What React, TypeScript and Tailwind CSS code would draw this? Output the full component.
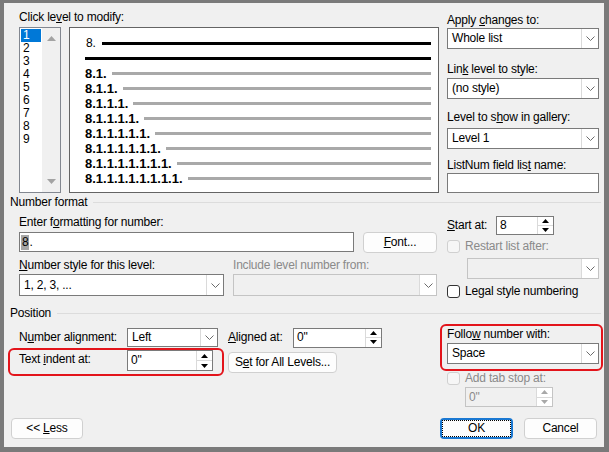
import React from 'react';

// Word "Define new Multilevel list" dialog, expanded view

const levels = ['1', '2', '3', '4', '5', '6', '7', '8', '9'];
const previewRows = [
  '8.1.',
  '8.1.1.',
  '8.1.1.1.',
  '8.1.1.1.1.',
  '8.1.1.1.1.1.',
  '8.1.1.1.1.1.1.',
  '8.1.1.1.1.1.1.1.',
  '8.1.1.1.1.1.1.1.1.',
];

function Chevron() {
  return (
    <svg width="9" height="5" viewBox="0 0 9 5" className="block">
      <path d="M0.5 0.5L4.5 4.5L8.5 0.5" fill="none" stroke="#6b6b6b" strokeWidth="1" />
    </svg>
  );
}

function Tri({ up, color }: { up?: boolean; color: string }) {
  return (
    <svg width="7" height="4" viewBox="0 0 7 4" className="block">
      <path d={up ? 'M0 4L3.5 0L7 4Z' : 'M0 0L3.5 4L7 0Z'} fill={color} />
    </svg>
  );
}

function Select({
  value,
  className,
  disabled,
}: {
  value?: string;
  className: string;
  disabled?: boolean;
}) {
  return (
    <div
      className={`flex border ${
        disabled ? 'border-[#c4c4c4] bg-[#f0f0f0]' : 'border-[#7a7a7a] bg-white'
      } ${className}`}
    >
      <div className="flex-1 flex items-center pl-[4px] text-black">{value}</div>
      <div className="w-[17px] border-l border-[#dadada] bg-white flex items-center justify-center">
        <Chevron />
      </div>
    </div>
  );
}

function Spin({
  value,
  className,
  disabled,
}: {
  value: string;
  className: string;
  disabled?: boolean;
}) {
  const c = disabled ? '#a8a8a8' : '#000000';
  return (
    <div
      className={`flex border ${
        disabled ? 'border-[#c4c4c4] bg-[#f0f0f0] text-[#8a8a8a]' : 'border-[#7a7a7a] bg-white text-black'
      } ${className}`}
    >
      <div className="flex-1 flex items-center pl-[3px]">{value}</div>
      <div className="w-[16px] flex flex-col border-l border-[#dadada] bg-white">
        <div className="flex-1 flex items-center justify-center border-b border-[#dadada]">
          <Tri up color={c} />
        </div>
        <div className="flex-1 flex items-center justify-center">
          <Tri color={c} />
        </div>
      </div>
    </div>
  );
}

function Check({ disabled }: { disabled?: boolean }) {
  return (
    <div
      className={`w-[13px] h-[13px] rounded-[3px] border ${
        disabled ? 'border-[#d0d0d0] bg-[#f6f6f6]' : 'border-[#333333] bg-white'
      }`}
    />
  );
}

function Btn({ children, className }: { children: React.ReactNode; className: string }) {
  return (
    <div
      className={`h-[21px] rounded-[4px] border border-[#d0d0d0] bg-[#fdfdfd] flex items-center justify-center ${className}`}
    >
      {children}
    </div>
  );
}

function Section({ title }: { title: string }) {
  return (
    <div className="flex items-center h-[15px] pl-[6px] pr-[3px]">
      <span>{title}</span>
      <div className="flex-1 h-px bg-[#dcdcdc] ml-[6px]" />
    </div>
  );
}

export default function App() {
  return (
    <div className="w-[609px] h-[452px] bg-[#7a7a7a] pt-[3px] pl-[4px] font-['Liberation_Sans',Arial,sans-serif] text-[12px] leading-[15px] tracking-[-0.2px] text-black">
      <div className="relative w-[600px] h-[444px] bg-[#f0f0f0]">
        {/* Top: levels, preview, list options */}
        <div className="flex items-start pl-[15px] pt-[7px]">
          <div className="w-[420px]">
            <div className="h-[15px]">
              Click le<u>v</u>el to modify:
            </div>
            <div className="mt-[2px] flex gap-[8px]">
              <div className="w-[42px] h-[166px] border border-[#828790] bg-white flex">
                <div className="w-[22px] pt-[1px] pl-[1px]">
                  {levels.map((l, i) => (
                    <div
                      key={l}
                      className={`h-[13px] leading-[13px] w-[20px] pl-[2px] ${
                        i === 0 ? 'bg-[#0078d7] text-white' : ''
                      }`}
                    >
                      {l}
                    </div>
                  ))}
                </div>
                <div className="w-[18px] bg-[#f0f0f0] flex flex-col justify-between items-center py-[8px]">
                  <svg width="9" height="5" viewBox="0 0 9 5" className="block">
                    <path d="M0 5L4.5 0L9 5Z" fill="#a3a3a3" />
                  </svg>
                  <svg width="9" height="5" viewBox="0 0 9 5" className="block">
                    <path d="M0 0L4.5 5L9 0Z" fill="#a3a3a3" />
                  </svg>
                </div>
              </div>
              <div className="w-[370px] h-[166px] border border-[#646464] bg-white pt-[8px] pl-[15px] pr-[7px]">
                <div className="h-[15px] flex items-center">
                  <span className="ml-[1px]">8.</span>
                  <div className="flex-1 h-[3px] bg-black ml-[6px]" />
                </div>
                <div className="h-[15px] flex items-center">
                  <div className="flex-1 h-[3px] bg-black" />
                </div>
                {previewRows.map((r) => (
                  <div key={r} className="h-[15px] flex items-center">
                    <span className="font-bold text-[13px] tracking-normal">{r}</span>
                    <div className="flex-1 h-[3px] bg-[#a9a9a9] ml-[5px]" />
                  </div>
                ))}
              </div>
            </div>
          </div>

          <div className="ml-[8px] w-[152px] pt-[3px]">
            <div className="h-[15px]">
              Apply <u>c</u>hanges to:
            </div>
            <Select value="Whole list" className="h-[21px]" />
            <div className="h-[15px] mt-[13px]">
              Lin<u>k</u> level to style:
            </div>
            <Select value="(no style)" className="h-[21px] mt-[1px]" />
            <div className="h-[15px] mt-[11px]">
              Level to s<u>h</u>ow in gallery:
            </div>
            <Select value="Level 1" className="h-[21px] mt-[3px]" />
            <div className="h-[15px] mt-[9px]">
              ListNum field lis<u>t</u> name:
            </div>
            <div className="h-[20px] border border-[#7a7a7a] bg-white" />
          </div>
        </div>

        {/* Number format */}
        <div className="mt-[2px]">
          <Section title="Number format" />
        </div>
        <div className="flex items-start pl-[15px]">
          <div className="w-[418px]">
            <div className="h-[15px] mt-[5px]">
              Enter f<u>o</u>rmatting for number:
            </div>
            <div className="flex items-start mt-[2px]">
              <div className="w-[335px] h-[20px] border border-[#7a7a7a] bg-white flex items-center pl-[1px]">
                <span className="bg-[#a6a6a6] px-[1px]">8</span>
                <span>.</span>
              </div>
              <Btn className="ml-[9px] w-[74px]">
                <span>
                  <u>F</u>ont...
                </span>
              </Btn>
            </div>
            <div className="flex h-[15px] mt-[5px]">
              <div className="w-[214px]">
                <u>N</u>umber style for this level:
              </div>
              <div className="text-[#8a8a8a]">Include level number from:</div>
            </div>
            <div className="flex gap-[9px] mt-[1px]">
              <Select value="1, 2, 3, ..." className="w-[205px] h-[22px]" />
              <Select disabled className="w-[204px] h-[22px]" />
            </div>
          </div>

          <div className="ml-[10px] w-[152px]">
            <div className="flex items-center h-[19px] mt-[6px]">
              <div className="w-[49px]">
                <u>S</u>tart at:
              </div>
              <Spin value="8" className="w-[58px] h-[19px]" />
            </div>
            <div className="flex items-center h-[13px] mt-[5px]">
              <Check disabled />
              <span className="ml-[5px] text-[#8a8a8a]">Restart list after:</span>
            </div>
            <Select disabled className="ml-[20px] w-[132px] h-[21px] mt-[5px]" />
            <div className="flex items-center h-[13px] mt-[6px]">
              <Check />
              <span className="ml-[5px]">
                Le<u>g</u>al style numbering
              </span>
            </div>
          </div>
        </div>

        {/* Position */}
        <div className="mt-[8px]">
          <Section title="Position" />
        </div>
        <div className="flex items-start pl-[15px]">
          <div className="w-[418px]">
            <div className="flex items-center h-[21px] mt-[6px]">
              <div className="w-[108px]">
                N<u>u</u>mber alignment:
              </div>
              <Select value="Left" className="w-[91px] h-[19px]" />
              <div className="ml-[10px] w-[65px]">
                <u>A</u>ligned at:
              </div>
              <Spin value={'0"'} className="w-[89px] h-[20px]" />
            </div>
            <div className="flex items-start mt-[1px]">
              <div className="w-[108px] mt-[3px]">
                Text <u>i</u>ndent at:
              </div>
              <Spin value={'0"'} className="w-[86px] h-[21px] mt-[1px]" />
              <Btn className="ml-[15px] w-[109px] mt-[3px]">
                <span>
                  S<u>e</u>t for All Levels...
                </span>
              </Btn>
            </div>
          </div>

          <div className="ml-[10px] w-[152px]">
            <div className="h-[15px] mt-[6px]">
              Follo<u>w</u> number with:
            </div>
            <Select value="Space" className="h-[21px] mt-[1px]" />
            <div className="flex items-center h-[13px] mt-[8px]">
              <Check disabled />
              <span className="ml-[5px] text-[#8a8a8a]">Add tab stop at:</span>
            </div>
            <Spin disabled value={'0"'} className="ml-[18px] w-[88px] h-[20px] mt-[2px]" />
          </div>
        </div>

        {/* Bottom buttons */}
        <div className="flex mt-[11px] pl-[7px] pr-[7px]">
          <Btn className="w-[72px]">
            <span>
              &lt;&lt; <u>L</u>ess
            </span>
          </Btn>
          <div className="ml-auto relative w-[73px] h-[21px] rounded-[4px] border-2 border-[#1a78d2] bg-[#fdfdfd] flex items-center justify-center">
            <div className="absolute inset-0 border border-dotted border-black" />
            <span>OK</span>
          </div>
          <Btn className="ml-[11px] w-[73px]">
            <span>Cancel</span>
          </Btn>
        </div>

        {/* Red annotation boxes */}
        <div className="absolute left-[4px] top-[345px] w-[216px] h-[28px] border-2 border-[#e3141b] rounded-[6px]" />
        <div className="absolute left-[436px] top-[321px] w-[163px] h-[47px] border-2 border-[#e3141b] rounded-[6px]" />
      </div>
    </div>
  );
}
